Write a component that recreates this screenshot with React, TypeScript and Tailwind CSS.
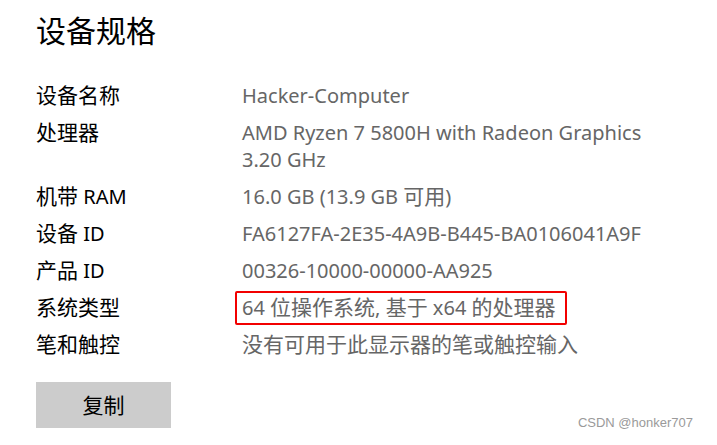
import React from "react";

function T({ s }: { s: string }) {
  const parts = s.split(/([\u3000-\u9fff\uff00-\uffef]+)/);
  return (
    <>
      {parts.map((p, i) =>
        /[\u3000-\u9fff\uff00-\uffef]/.test(p) ? (
          <span key={i} className="text-[21px]">
            {p}
          </span>
        ) : (
          <React.Fragment key={i}>{p}</React.Fragment>
        )
      )}
    </>
  );
}

const rows: { label: string; value: string[]; boxed?: boolean }[] = [
  { label: "设备名称", value: ["Hacker-Computer"] },
  { label: "处理器", value: ["AMD Ryzen 7 5800H with Radeon Graphics", "3.20 GHz"] },
  { label: "机带 RAM", value: ["16.0 GB (13.9 GB 可用)"] },
  { label: "设备 ID", value: ["FA6127FA-2E35-4A9B-B445-BA0106041A9F"] },
  { label: "产品 ID", value: ["00326-10000-00000-AA925"] },
  { label: "系统类型", value: ["64 位操作系统, 基于 x64 的处理器"], boxed: true },
  { label: "笔和触控", value: ["没有可用于此显示器的笔或触控输入"] },
];

export default function App() {
  return (
    <div
      className="relative w-[717px] h-[445px] bg-white overflow-hidden pl-[36px] pt-[11px]"
      style={{ fontFamily: '"Noto Sans", "Noto Sans CJK SC", sans-serif' }}
    >
      <h1 className="text-[30px] leading-[40px] text-black font-normal">设备规格</h1>
      <div className="mt-[31px] flex flex-col gap-[10px]">
        {rows.map((r) => (
          <div key={r.label} className="flex text-[20px] leading-[27px]">
            <div className="w-[206px] shrink-0 text-black h-[27px]">
              <T s={r.label} />
            </div>
            <div className="relative text-[#666666] flex flex-col">
              {r.boxed && (
                <div className="absolute left-[-7px] top-[-3px] w-[332px] h-[34px] border-2 border-[#f20000] rounded-[2px]" />
              )}
              {r.value.map((v) => (
                <div key={v} className="h-[27px] whitespace-nowrap">
                  <T s={v} />
                </div>
              ))}
            </div>
          </div>
        ))}
      </div>
      <button className="mt-[24px] w-[135px] h-[46px] bg-[#cccccc] text-black text-[21px] leading-[27px] flex items-center justify-center">
        复制
      </button>
      <div
        className="absolute right-[24px] bottom-[14px] text-[13px] leading-[16px] text-[#9a9a9a]"
        style={{ fontFamily: '"Liberation Sans", Arial, sans-serif' }}
      >
        CSDN @honker707
      </div>
    </div>
  );
}
